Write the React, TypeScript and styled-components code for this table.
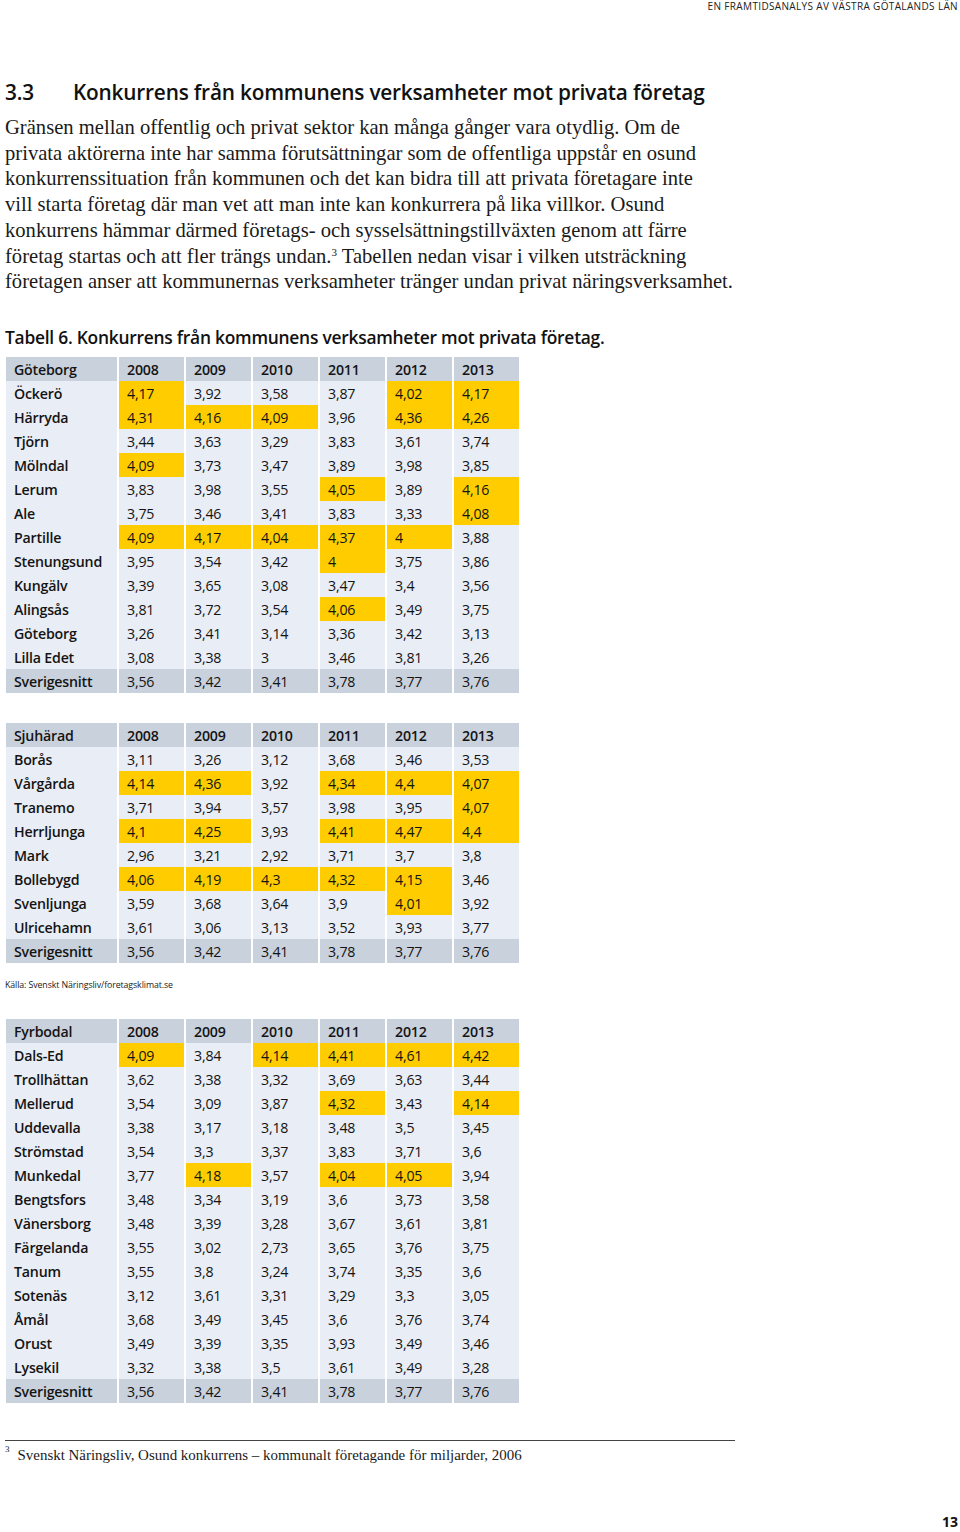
import React from "react";
import styled, { createGlobalStyle } from "styled-components";

const Global = createGlobalStyle`
  html, body { margin: 0; padding: 0; background: #ffffff; }
  body { width: 960px; color: #1a1a1a; }
`;

const Page = styled.div`
  width: 960px;
  min-height: 1532px;
  box-sizing: border-box;
  padding: 0 2px 0 5px;
  display: flex;
  flex-direction: column;
`;

const RunningHead = styled.div`
  align-self: flex-end;
  font-family: "Open Sans", "Noto Sans", sans-serif;
  font-size: 10px;
  letter-spacing: 0.35px;
  line-height: 13px;
  color: #222;
`;

const Heading = styled.h2`
  margin: 66px 0 0 0;
  display: flex;
  font-family: "Open Sans", "Noto Sans", sans-serif;
  font-weight: 600;
  font-size: 20.8px;
  line-height: 26px;
  color: #111;
  letter-spacing: -0.2px;
`;

const HeadNum = styled.span`
  width: 68px;
`;

const Body = styled.p`
  margin: 10px 0 0 0;
  font-family: "Liberation Serif", "Times New Roman", serif;
  font-size: 20.6px;
  line-height: 25.7px;
  color: #1a1a1a;
  white-space: nowrap;
`;

const Sup = styled.sup`
  font-size: 11px;
  line-height: 0;
  vertical-align: 7px;
`;

const TableTitle = styled.div`
  margin-top: 31px;
  font-family: "Open Sans", "Noto Sans", sans-serif;
  font-weight: 600;
  font-size: 17.4px;
  line-height: 22px;
  color: #111;
  letter-spacing: -0.25px;
`;

const Table = styled.div<{ $mt: number }>`
  margin-top: ${(p) => p.$mt}px;
  margin-left: 1px;
  display: grid;
  grid-template-columns: 111px repeat(6, 65px);
  column-gap: 2px;
  width: max-content;
`;

const Cell = styled.div<{ $tone: "head" | "body" | "yellow" | "avg"; $bold?: boolean }>`
  height: 24px;
  box-sizing: border-box;
  padding: 1px 0 0 8px;
  display: flex;
  align-items: center;
  font-family: "Open Sans", "Noto Sans", sans-serif;
  font-size: 14.2px;
  font-weight: ${(p) => (p.$bold ? 600 : 400)};
  letter-spacing: -0.2px;
  color: #141414;
  background: ${(p) =>
    p.$tone === "head" || p.$tone === "avg"
      ? "#c9d1dc"
      : p.$tone === "yellow"
      ? "#ffcc00"
      : "#e9edf5"};
`;

const Source = styled.div`
  margin-top: 17px;
  font-family: "Open Sans", "Noto Sans", sans-serif;
  font-size: 8.8px;
  line-height: 10px;
  color: #222;
  letter-spacing: -0.1px;
`;

const Footnotes = styled.div`
  margin-top: 37px;
  width: 730px;
  border-top: 1px solid #444;
  padding-top: 5px;
  display: flex;
  gap: 8px;
  font-family: "Liberation Serif", "Times New Roman", serif;
  font-size: 14.95px;
  line-height: 18px;
  color: #1a1a1a;
`;

const FootMark = styled.span`
  font-size: 9px;
  line-height: 10px;
  align-self: flex-start;
  margin-top: -2px;
`;

const PageNum = styled.div`
  margin-top: auto;
  align-self: flex-end;
  font-family: "Open Sans", "Noto Sans", sans-serif;
  font-weight: 700;
  font-size: 14px;
  line-height: 18px;
  color: #111;
  padding-bottom: 1px;
`;

type Row = [string, ...string[]];

const years = ["2008", "2009", "2010", "2011", "2012", "2013"];
const avg: Row = ["Sverigesnitt", "3,56", "3,42", "3,41", "3,78", "3,77", "3,76"];

const t1: Row[] = [
  ["Öckerö", "4,17", "3,92", "3,58", "3,87", "4,02", "4,17"],
  ["Härryda", "4,31", "4,16", "4,09", "3,96", "4,36", "4,26"],
  ["Tjörn", "3,44", "3,63", "3,29", "3,83", "3,61", "3,74"],
  ["Mölndal", "4,09", "3,73", "3,47", "3,89", "3,98", "3,85"],
  ["Lerum", "3,83", "3,98", "3,55", "4,05", "3,89", "4,16"],
  ["Ale", "3,75", "3,46", "3,41", "3,83", "3,33", "4,08"],
  ["Partille", "4,09", "4,17", "4,04", "4,37", "4", "3,88"],
  ["Stenungsund", "3,95", "3,54", "3,42", "4", "3,75", "3,86"],
  ["Kungälv", "3,39", "3,65", "3,08", "3,47", "3,4", "3,56"],
  ["Alingsås", "3,81", "3,72", "3,54", "4,06", "3,49", "3,75"],
  ["Göteborg", "3,26", "3,41", "3,14", "3,36", "3,42", "3,13"],
  ["Lilla Edet", "3,08", "3,38", "3", "3,46", "3,81", "3,26"],
];

const t2: Row[] = [
  ["Borås", "3,11", "3,26", "3,12", "3,68", "3,46", "3,53"],
  ["Vårgårda", "4,14", "4,36", "3,92", "4,34", "4,4", "4,07"],
  ["Tranemo", "3,71", "3,94", "3,57", "3,98", "3,95", "4,07"],
  ["Herrljunga", "4,1", "4,25", "3,93", "4,41", "4,47", "4,4"],
  ["Mark", "2,96", "3,21", "2,92", "3,71", "3,7", "3,8"],
  ["Bollebygd", "4,06", "4,19", "4,3", "4,32", "4,15", "3,46"],
  ["Svenljunga", "3,59", "3,68", "3,64", "3,9", "4,01", "3,92"],
  ["Ulricehamn", "3,61", "3,06", "3,13", "3,52", "3,93", "3,77"],
];

const t3: Row[] = [
  ["Dals-Ed", "4,09", "3,84", "4,14", "4,41", "4,61", "4,42"],
  ["Trollhättan", "3,62", "3,38", "3,32", "3,69", "3,63", "3,44"],
  ["Mellerud", "3,54", "3,09", "3,87", "4,32", "3,43", "4,14"],
  ["Uddevalla", "3,38", "3,17", "3,18", "3,48", "3,5", "3,45"],
  ["Strömstad", "3,54", "3,3", "3,37", "3,83", "3,71", "3,6"],
  ["Munkedal", "3,77", "4,18", "3,57", "4,04", "4,05", "3,94"],
  ["Bengtsfors", "3,48", "3,34", "3,19", "3,6", "3,73", "3,58"],
  ["Vänersborg", "3,48", "3,39", "3,28", "3,67", "3,61", "3,81"],
  ["Färgelanda", "3,55", "3,02", "2,73", "3,65", "3,76", "3,75"],
  ["Tanum", "3,55", "3,8", "3,24", "3,74", "3,35", "3,6"],
  ["Sotenäs", "3,12", "3,61", "3,31", "3,29", "3,3", "3,05"],
  ["Åmål", "3,68", "3,49", "3,45", "3,6", "3,76", "3,74"],
  ["Orust", "3,49", "3,39", "3,35", "3,93", "3,49", "3,46"],
  ["Lysekil", "3,32", "3,38", "3,5", "3,61", "3,49", "3,28"],
];

const num = (s: string) => parseFloat(s.replace(",", "."));

function RegionTable({ title, rows, mt }: { title: string; rows: Row[]; mt: number }) {
  return (
    <Table $mt={mt}>
      <Cell $tone="head" $bold>{title}</Cell>
      {years.map((y) => (
        <Cell key={y} $tone="head" $bold>{y}</Cell>
      ))}
      {rows.map((r) => (
        <React.Fragment key={r[0]}>
          <Cell $tone="body" $bold>{r[0]}</Cell>
          {r.slice(1).map((v, i) => (
            <Cell key={i} $tone={num(v) >= 4 ? "yellow" : "body"}>{v}</Cell>
          ))}
        </React.Fragment>
      ))}
      <Cell $tone="avg" $bold>{avg[0]}</Cell>
      {avg.slice(1).map((v, i) => (
        <Cell key={i} $tone="avg">{v}</Cell>
      ))}
    </Table>
  );
}

export default function App() {
  return (
    <>
      <Global />
      <Page>
        <RunningHead>EN FRAMTIDSANALYS AV VÄSTRA GÖTALANDS LÄN</RunningHead>
        <Heading>
          <HeadNum>3.3</HeadNum>
          <span>Konkurrens från kommunens verksamheter mot privata företag</span>
        </Heading>
        <Body>
          Gränsen mellan offentlig och privat sektor kan många gånger vara otydlig. Om de
          <br />
          privata aktörerna inte har samma förutsättningar som de offentliga uppstår en osund
          <br />
          konkurrenssituation från kommunen och det kan bidra till att privata företagare inte
          <br />
          vill starta företag där man vet att man inte kan konkurrera på lika villkor. Osund
          <br />
          konkurrens hämmar därmed företags- och sysselsättningstillväxten genom att färre
          <br />
          företag startas och att fler trängs undan.<Sup>3</Sup> Tabellen nedan visar i vilken utsträckning
          <br />
          företagen anser att kommunernas verksamheter tränger undan privat näringsverksamhet.
        </Body>
        <TableTitle>Tabell 6. Konkurrens från kommunens verksamheter mot privata företag.</TableTitle>
        <RegionTable title="Göteborg" rows={t1} mt={9} />
        <RegionTable title="Sjuhärad" rows={t2} mt={30} />
        <Source>Källa: Svenskt Näringsliv/foretagsklimat.se</Source>
        <RegionTable title="Fyrbodal" rows={t3} mt={29} />
        <Footnotes>
          <FootMark>3</FootMark>
          <span>Svenskt Näringsliv, Osund konkurrens – kommunalt företagande för miljarder, 2006</span>
        </Footnotes>
        <PageNum>13</PageNum>
      </Page>
    </>
  );
}
